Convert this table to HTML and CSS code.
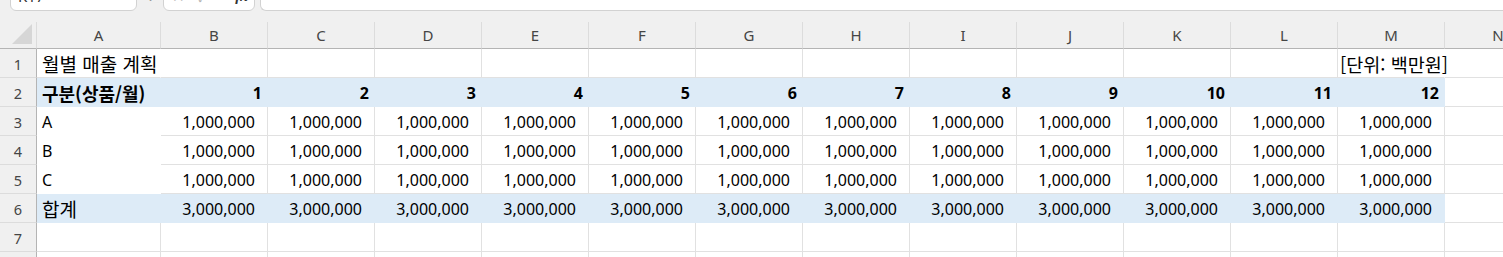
FILE: index.html
```html
<!DOCTYPE html>
<html lang="ko">
<head>
<meta charset="utf-8">
<title>월별 매출 계획</title>
<link rel="stylesheet" href="styles.css">
</head>
<body>
<div class="toolbar">
  <div class="box namebox">K17</div>
  <div class="dots">⋮</div>
  <div class="box fxbox"><span class="ic">✕</span><span class="ic">✓</span><span class="fx">fx</span></div>
  <div class="box formula"></div>
</div>
<div class="sheet">
  <div class="corner"><svg width="22" height="22" viewBox="0 0 22 22"><path d="M21 1 L21 21 L1 21 Z" fill="#d6d6d6"/></svg></div>
  <div class="col">A</div><div class="col">B</div><div class="col">C</div><div class="col">D</div><div class="col">E</div><div class="col">F</div><div class="col">G</div><div class="col">H</div><div class="col">I</div><div class="col">J</div><div class="col">K</div><div class="col">L</div><div class="col">M</div><div class="col">N</div>

  <div class="row">1</div>
  <div class="c spill ko">월별 매출 계획</div><div class="c"></div><div class="c"></div><div class="c"></div><div class="c"></div><div class="c"></div><div class="c"></div><div class="c"></div><div class="c"></div><div class="c"></div><div class="c"></div><div class="c"></div><div class="c spill ko unit">[단위: 백만원]</div><div class="c"></div>

  <div class="row">2</div>
  <div class="c blue bold ko">구분(상품/월)</div><div class="c blue bold num hd">1</div><div class="c blue bold num hd">2</div><div class="c blue bold num hd">3</div><div class="c blue bold num hd">4</div><div class="c blue bold num hd">5</div><div class="c blue bold num hd">6</div><div class="c blue bold num hd">7</div><div class="c blue bold num hd">8</div><div class="c blue bold num hd">9</div><div class="c blue bold num hd">10</div><div class="c blue bold num hd">11</div><div class="c blue bold num hd">12</div><div class="c"></div>

  <div class="row">3</div>
  <div class="c white">A</div><div class="c num">1,000,000</div><div class="c num">1,000,000</div><div class="c num">1,000,000</div><div class="c num">1,000,000</div><div class="c num">1,000,000</div><div class="c num">1,000,000</div><div class="c num">1,000,000</div><div class="c num">1,000,000</div><div class="c num">1,000,000</div><div class="c num">1,000,000</div><div class="c num">1,000,000</div><div class="c num">1,000,000</div><div class="c"></div>

  <div class="row">4</div>
  <div class="c white">B</div><div class="c num">1,000,000</div><div class="c num">1,000,000</div><div class="c num">1,000,000</div><div class="c num">1,000,000</div><div class="c num">1,000,000</div><div class="c num">1,000,000</div><div class="c num">1,000,000</div><div class="c num">1,000,000</div><div class="c num">1,000,000</div><div class="c num">1,000,000</div><div class="c num">1,000,000</div><div class="c num">1,000,000</div><div class="c"></div>

  <div class="row">5</div>
  <div class="c white">C</div><div class="c num">1,000,000</div><div class="c num">1,000,000</div><div class="c num">1,000,000</div><div class="c num">1,000,000</div><div class="c num">1,000,000</div><div class="c num">1,000,000</div><div class="c num">1,000,000</div><div class="c num">1,000,000</div><div class="c num">1,000,000</div><div class="c num">1,000,000</div><div class="c num">1,000,000</div><div class="c num">1,000,000</div><div class="c"></div>

  <div class="row">6</div>
  <div class="c blue ko">합계</div><div class="c blue num">3,000,000</div><div class="c blue num">3,000,000</div><div class="c blue num">3,000,000</div><div class="c blue num">3,000,000</div><div class="c blue num">3,000,000</div><div class="c blue num">3,000,000</div><div class="c blue num">3,000,000</div><div class="c blue num">3,000,000</div><div class="c blue num">3,000,000</div><div class="c blue num">3,000,000</div><div class="c blue num">3,000,000</div><div class="c blue num">3,000,000</div><div class="c"></div>

  <div class="row">7</div>
  <div class="c"></div><div class="c"></div><div class="c"></div><div class="c"></div><div class="c"></div><div class="c"></div><div class="c"></div><div class="c"></div><div class="c"></div><div class="c"></div><div class="c"></div><div class="c"></div><div class="c"></div><div class="c"></div>

  <div class="row">8</div>
  <div class="c"></div><div class="c"></div><div class="c"></div><div class="c"></div><div class="c"></div><div class="c"></div><div class="c"></div><div class="c"></div><div class="c"></div><div class="c"></div><div class="c"></div><div class="c"></div><div class="c"></div><div class="c"></div>
</div>
</body>
</html>
```

FILE: styles.css
```css
html, body {
  margin: 0;
  padding: 0;
  background: #ffffff;
}
body {
  width: 1503px;
  height: 257px;
  overflow: hidden;
  font-family: "Noto Sans", "Noto Sans CJK KR", sans-serif;
  color: #000;
}

/* formula bar strip */
.toolbar {
  height: 22px;
  background: #f0f0f0;
  display: flex;
  align-items: flex-start;
  padding-left: 10px;
  overflow: hidden;
}
.box {
  box-sizing: border-box;
  height: 31px;
  margin-top: -20px;
  background: #ffffff;
  border: 1px solid #d2d2d2;
  border-radius: 0 0 6px 6px;
  font-size: 15px;
  line-height: 20px;
  padding-top: 5px;
  color: #333;
}
.namebox {
  width: 127px;
  padding-left: 7px;
}
.dots {
  width: 26px;
  text-align: center;
  font-size: 15px;
  line-height: 20px;
  margin-top: -17px;
  color: #9a9a9a;
}
.fxbox {
  width: 92px;
  padding-left: 8px;
  display: flex;
  gap: 12px;
}
.ic {
  color: #b5b5b5;
}
.fx {
  margin-left: 16px;
  font-style: italic;
  font-family: "Liberation Serif", serif;
  font-weight: bold;
  color: #333;
}
.formula {
  flex: 1;
  margin-left: 5px;
  border-radius: 0 0 0 6px;
  border-right: none;
}

/* sheet grid */
.sheet {
  display: grid;
  grid-template-columns: 37px 124px repeat(13, 107px);
  grid-template-rows: 27px repeat(8, 29px);
  height: 235px;
  overflow: hidden;
}
.sheet > div {
  box-sizing: border-box;
  white-space: nowrap;
}
.corner {
  background: #f0f0f0;
  border-right: 1px solid #dcdcdc;
  border-bottom: 1px solid #b4b4b4;
  display: flex;
  align-items: flex-end;
  justify-content: flex-end;
  padding: 0 3px 3px 0;
}
.corner svg {
  display: block;
}
.col {
  background: #f0f0f0;
  border-right: 1px solid #dcdcdc;
  border-bottom: 1px solid #b4b4b4;
  text-align: center;
  font-size: 15px;
  line-height: 20px;
  padding-top: 3px;
  color: #454545;
}
.row {
  background: #f0f0f0;
  border-right: 1px solid #b4b4b4;
  border-bottom: 1px solid #dcdcdc;
  text-align: center;
  font-size: 14.5px;
  line-height: 20px;
  padding-top: 5px;
  color: #454545;
}
.c {
  border-right: 1px solid #e1e1e1;
  border-bottom: 1px solid #e1e1e1;
  font-size: 16px;
  line-height: 22px;
  padding: 4px 5px 0 5px;
}
.spill {
  border-right-color: transparent;
  position: relative;
  z-index: 1;
}
.ko {
  font-family: "Noto Sans CJK KR", "Noto Sans", sans-serif;
  font-size: 19px;
  line-height: 22px;
}
.bold.ko {
  font-size: 18px;
}
.unit {
  padding-left: 2px;
  font-size: 18.5px;
}
.num {
  text-align: right;
  padding-right: 12px;
}
.hd {
  padding-right: 5px;
}
.bold {
  font-weight: bold;
}
.blue {
  background: #ddebf7;
  border-right-color: #ddebf7;
  border-bottom-color: #ddebf7;
}
.white {
  background: #ffffff;
  border-right-color: #ffffff;
  border-bottom-color: #ffffff;
}
```
